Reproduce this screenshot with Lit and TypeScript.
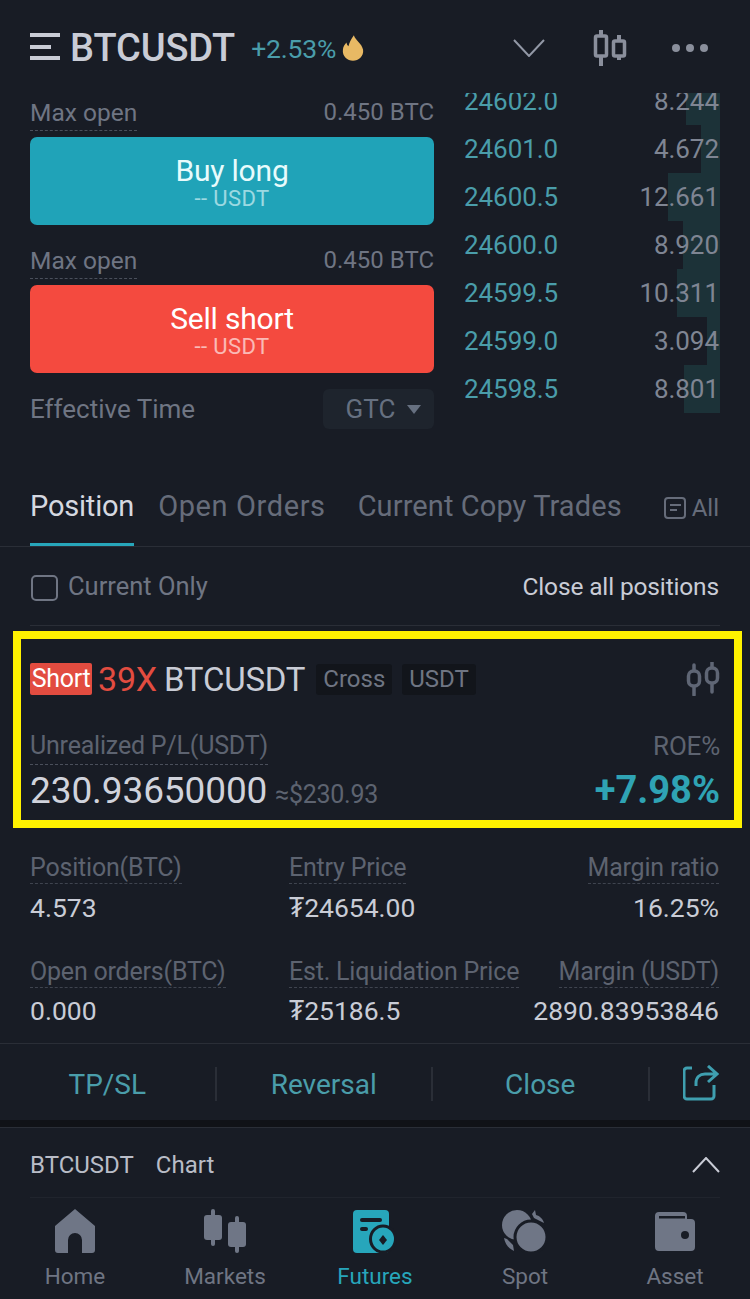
import { LitElement, html, css, svg } from "lit";
import { customElement } from "lit/decorators.js";

const headCandles = html`<svg width="34" height="36" viewBox="0 0 34 36" fill="none" stroke="#8a8f9c">
  <path d="M8 0v36M26 5v25" stroke-width="4"/>
  <rect x="2.5" y="6" width="11" height="20" rx="1.5" fill="#181c25" stroke-width="3.5"/>
  <rect x="20.5" y="11" width="11" height="15" rx="1.5" fill="#181c25" stroke-width="3.5"/>
</svg>`;

const cardCandles = html`<svg width="34" height="34" viewBox="0 0 34 34" fill="none" stroke="#5f6675">
  <path d="M8 3v30M26 0v30" stroke-width="3.5" stroke-linecap="round"/>
  <rect x="2.5" y="9" width="11" height="15" rx="5" fill="#181c25" stroke-width="3.5"/>
  <rect x="20.5" y="6" width="11" height="15" rx="5" fill="#181c25" stroke-width="3.5"/>
</svg>`;

const book: [string, string, number][] = [
  ["24602.0", "8.244", 34],
  ["24601.0", "4.672", 19],
  ["24600.5", "12.661", 52],
  ["24600.0", "8.920", 37],
  ["24599.5", "10.311", 43],
  ["24599.0", "3.094", 13],
  ["24598.5", "8.801", 36],
];

const navIcons = {
  home: svg`<path d="M21 0 L41 17 V41 a3 3 0 0 1 -3 3 H28 V31 a7 7 0 0 0 -14 0 V44 H4 a3 3 0 0 1 -3 -3 V17 Z" fill="#6f7686"/>`,
  markets: svg`<g fill="#6f7686"><rect x="0" y="6" width="18" height="25" rx="3"/><rect x="7" y="0" width="4" height="37" rx="2"/><rect x="24" y="13" width="18" height="25" rx="3"/><rect x="31" y="7" width="4" height="37" rx="2"/></g>`,
  futures: svg`<rect x="0" y="1" width="36" height="43" rx="4" fill="#27a6bb"/><rect x="7" y="9" width="22" height="4" rx="2" fill="#181c25"/><rect x="7" y="18" width="8" height="4" rx="2" fill="#181c25"/><ellipse cx="30" cy="30" rx="12.5" ry="13" fill="#27a6bb" stroke="#181c25" stroke-width="3"/><path d="M30 26l4 5-4 5-4-5z" fill="#181c25"/>`,
  spot: svg`<path d="M33 1l1 5c4 1 7 4 8 8l-4-2-6-3-2-4zM2 29l3 1 6 6 1 6c-5-2-9-7-10-13z" fill="#6f7686"/><circle cx="15" cy="16" r="15" fill="#6f7686"/><circle cx="29" cy="28" r="16" fill="#6f7686" stroke="#181c25" stroke-width="3"/>`,
  asset: svg`<path d="M1 7 a4 4 0 0 1 4-4 H29 a4 4 0 0 1 4 4 V10 H37 a4 4 0 0 1 4 4 V38 a4 4 0 0 1 -4 4 H5 a4 4 0 0 1 -4-4 Z" fill="#6f7686"/><rect x="5" y="7" width="26" height="2.5" fill="#181c25"/><circle cx="31" cy="26" r="4" fill="#181c25"/>`,
};

@customElement("app-root")
export class AppRoot extends LitElement {
  static styles = css`
    :host {
      display: block;
      width: 750px;
      height: 1299px;
      overflow: hidden;
      background: #181c25;
      font-family: Roboto, "Noto Sans", sans-serif;
      color: #6f7583;
    }
    .head { height: 92px; padding: 4px 30px 0; display: flex; align-items: center; box-sizing: border-box; }
    .burger { width: 30px; height: 27px; margin-right: 10px; margin-top: -3px; display: flex; flex-direction: column; justify-content: space-between; }
    .burger i { display: block; height: 4px; background: #c9ccd6; }
    .burger i:nth-child(2) { width: 21px; }
    .sym { font-size: 38px; font-weight: 500; color: #c9ccd6; letter-spacing: -0.1px; }
    .chg { font-size: 26.5px; color: #4a9daa; margin-left: 16px; letter-spacing: -0.2px; }
    .flame { margin-left: 6px; }
    .head-r { margin-left: auto; display: flex; align-items: center; margin-right: 12px; }
    .chev { margin-right: 48px; }
    .dots { margin-left: 45px; display: flex; gap: 6px; }
    .dots i { width: 8px; height: 8px; border-radius: 50%; background: #8a8f9c; }

    .top { display: flex; height: 321px; padding: 0 30px; }
    .left { width: 404px; }
    .maxrow { display: flex; justify-content: space-between; align-items: flex-start; height: 38px; font-size: 24.5px; line-height: 27px; margin-top: 7px; }
    .maxrow.second { margin-top: 0; }
    .amt { font-size: 24px; }
    .dash { border-bottom: 1.5px dashed #4a4f5b; padding-bottom: 4px; }
    .btn { height: 88px; border-radius: 7px; display: flex; flex-direction: column; align-items: center; justify-content: center; padding-top: 2px; box-sizing: border-box; }
    .btn.buy { background: #20a3b8; color: #e8fbfc; }
    .btn.sell { background: #f44a3f; color: #fff; }
    .btn b { font-weight: 400; font-size: 30px; line-height: 33px; letter-spacing: -0.2px; }
    .btn span { font-size: 22px; line-height: 24px; opacity: 0.62; letter-spacing: 0.4px; }
    .gap { height: 22px; }
    .eff { display: flex; justify-content: space-between; align-items: center; margin-top: 16px; font-size: 26px; }
    .gtc { width: 111px; height: 40px; padding-left: 10px; box-sizing: border-box; background: #1e242d; border-radius: 6px; display: flex; align-items: center; justify-content: center; gap: 12px; color: #667080; }
    .tri { width: 0; height: 0; border: 7px solid transparent; border-top: 9px solid #667080; border-bottom: 0; }

    .right { flex: 1; overflow: hidden; margin-top: 1px; }
    .book { margin-top: -16px; }
    .row { position: relative; height: 48px; display: flex; justify-content: space-between; align-items: center; font-size: 26px; padding-left: 30px; letter-spacing: -0.05px; }
    .row .bar { position: absolute; right: 0; top: 0; bottom: 0; background: #1c3238; }
    .row .p { position: relative; color: #4a9daa; }
    .row .q { position: relative; color: #7f8593; margin-right: 1px; }

    .tabs { margin-top: 54px; height: 80px; box-sizing: border-box; border-bottom: 1px solid #2a2e37; padding: 0 30px; display: flex; font-size: 29px; color: #666c7a; align-items: flex-start; }
    .tab { height: 79px; box-sizing: border-box; padding-top: 22px; margin-right: 25px; }
    .tab.on { color: #d5d8e0; border-bottom: 3px solid #27a6bb; letter-spacing: -0.2px; margin-right: 24px; }
    .tab.t2 { letter-spacing: 0.6px; }
    .tab.t3 { margin-right: 0; margin-left: 7px; letter-spacing: 0.1px; }
    .all { margin-left: auto; display: flex; align-items: center; gap: 6px; font-size: 24px; height: 44px; margin-top: 19px; color: #666c7a; }
    .all span { margin-right: 1px; }

    .cur { height: 79px; box-sizing: border-box; margin: 0 30px; border-bottom: 1px solid #2a2e37; display: flex; align-items: center; justify-content: space-between; font-size: 25.5px; }
    .cur .l { display: flex; align-items: center; gap: 10px; color: #6f7583; }
    .box { width: 27px; height: 26px; border: 2.5px solid #6f7583; border-radius: 5px; box-sizing: border-box; margin-left: 1px; margin-top: 4px; }
    .cur .r { color: #c9ccd6; font-size: 24.5px; letter-spacing: -0.15px; margin-right: 1px; }

    .card { margin: 5px 8px 0 13px; height: 197px; box-sizing: border-box; border: 8px solid #fff200; padding: 0 14px 0 9px; }
    .c1 { display: flex; align-items: center; height: 36px; margin-top: 22px; }
    .short { background: #e24c40; color: #fff; font-size: 25px; height: 32px; line-height: 32px; width: 62px; box-sizing: border-box; text-align: center; border-radius: 2px; letter-spacing: -0.3px; }
    .lev { color: #e24c40; font-size: 34px; margin-left: 6px; letter-spacing: -0.2px; }
    .name { color: #c9ccd6; font-size: 33px; margin-left: 7px; letter-spacing: -0.2px; }
    .tag { background: #12151b; color: #6f7583; font-size: 24px; height: 31px; line-height: 30px; padding: 0 7px; border-radius: 3px; margin-left: 10px; }
    .tag.first { margin-left: 11px; }
    .c1 svg { margin-left: auto; }
    .c2 { display: flex; justify-content: space-between; margin-top: 35px; font-size: 25px; line-height: 28px; color: #5d6370; letter-spacing: -0.2px; }
    .c2 .roel { font-size: 26px; }
    .c3 { display: flex; justify-content: space-between; align-items: baseline; margin-top: 3px; }
    .val { font-size: 37px; color: #d0d3dc; letter-spacing: -0.1px; }
    .usd { font-size: 25px; color: #5d6370; margin-left: 8px; letter-spacing: -0.3px; }
    .roe { font-size: 38px; font-weight: 700; color: #2fa3b4; }

    .stats { padding: 25px 31px 0 30px; height: 216px; box-sizing: border-box; border-bottom: 1px solid #2a2e37; }
    .srow { display: grid; grid-template-columns: 259px 1fr auto; height: 104px; }
    .srow > div:last-child { text-align: right; }
    .k { font-size: 25px; line-height: 30px; color: #5d6370; letter-spacing: -0.2px; display: inline-block; border-bottom: 1.5px dashed #3f444f; }
    .v { font-size: 26.5px; line-height: 30px; margin-top: 9px; color: #c9ccd6; }
    .srow + .srow .v { margin-top: 8px; }

    .actions { height: 76px; display: flex; align-items: center; font-size: 28px; color: #4a9daa; }
    .act { width: 216.5px; box-sizing: border-box; text-align: center; height: 34px; line-height: 36px; border-right: 2px solid #2a2e37; margin-top: 4px; }
    .shr { margin-left: 33px; margin-top: 2px; }
    .band { height: 8px; background: #101217; border-bottom: 1px solid #2a2e37; box-sizing: border-box; }
    .chart { height: 70px; padding-top: 4px; margin: 0 30px; box-sizing: border-box; border-bottom: 1px solid #20242d; display: flex; align-items: center; font-size: 24px; color: #b9bcc7; gap: 22px; }
    .chart svg { margin-left: auto; }

    .nav { display: grid; grid-template-columns: repeat(5, 150px); height: 100px; }
    .ni { display: flex; flex-direction: column; align-items: center; padding-top: 11px; font-size: 22.5px; color: #6f7583; }
    .ni svg { height: 44px; display: block; }
    .ni span { margin-top: 9px; line-height: 28px; }
    .ni.on { color: #27a6bb; }
  `;

  render() {
    return html`
      <div class="head">
        <div class="burger"><i></i><i></i><i></i></div>
        <span class="sym">BTCUSDT</span>
        <span class="chg">+2.53%</span>
        <svg class="flame" width="22" height="26" viewBox="0 0 24 28"><path d="M13 0c1 5 9 9 10 16 1 7-5 12-11 12S0 23 1 16c0-3 2-6 4-8 0 2 1 3 2 4 1-4 3-8 6-12z" fill="#e8b964"/></svg>
        <div class="head-r">
          <svg class="chev" width="32" height="18" viewBox="0 0 32 18" fill="none"><path d="M1 1l15 16L31 1" stroke="#9298a6" stroke-width="2"/></svg>
          ${headCandles}
          <div class="dots"><i></i><i></i><i></i></div>
        </div>
      </div>
      <div class="top">
        <div class="left">
          <div class="maxrow"><span class="dash">Max open</span><span class="amt">0.450 BTC</span></div>
          <div class="btn buy"><b>Buy long</b><span>-- USDT</span></div>
          <div class="gap"></div>
          <div class="maxrow second"><span class="dash">Max open</span><span class="amt">0.450 BTC</span></div>
          <div class="btn sell"><b>Sell short</b><span>-- USDT</span></div>
          <div class="eff"><span>Effective Time</span><div class="gtc">GTC<i class="tri"></i></div></div>
        </div>
        <div class="right">
          <div class="book">
            ${book.map(([p, q, w]) => html`<div class="row"><i class="bar" style="width:${w}px"></i><span class="p">${p}</span><span class="q">${q}</span></div>`)}
          </div>
        </div>
      </div>
      <div class="tabs">
        <div class="tab on">Position</div>
        <div class="tab t2">Open Orders</div>
        <div class="tab t3">Current Copy Trades</div>
        <div class="all">
          <svg width="22" height="22" viewBox="0 0 22 22" fill="none" stroke="#666c7a" stroke-width="2"><rect x="1" y="1" width="20" height="20" rx="3"/><path d="M6 8h11M6 13h7"/></svg>
          <span>All</span>
        </div>
      </div>
      <div class="cur">
        <div class="l"><i class="box"></i>Current Only</div>
        <div class="r">Close all positions</div>
      </div>
      <div class="card">
        <div class="c1">
          <span class="short">Short</span><span class="lev">39X</span><span class="name">BTCUSDT</span>
          <span class="tag first">Cross</span><span class="tag">USDT</span>
          ${cardCandles}
        </div>
        <div class="c2"><span class="dash">Unrealized P/L(USDT)</span><span class="roel">ROE%</span></div>
        <div class="c3"><div><span class="val">230.93650000</span><span class="usd">≈$230.93</span></div><span class="roe">+7.98%</span></div>
      </div>
      <div class="stats">
        <div class="srow">
          <div><div class="k">Position(BTC)</div><div class="v">4.573</div></div>
          <div><div class="k">Entry Price</div><div class="v">₮24654.00</div></div>
          <div><div class="k">Margin ratio</div><div class="v">16.25%</div></div>
        </div>
        <div class="srow">
          <div><div class="k">Open orders(BTC)</div><div class="v">0.000</div></div>
          <div><div class="k">Est. Liquidation Price</div><div class="v">₮25186.5</div></div>
          <div><div class="k">Margin (USDT)</div><div class="v">2890.83953846</div></div>
        </div>
      </div>
      <div class="actions">
        <div class="act">TP/SL</div><div class="act">Reversal</div><div class="act">Close</div>
        <svg class="shr" width="36" height="36" viewBox="0 0 36 36" fill="none" stroke="#3f9fb0" stroke-width="3"><path d="M9 3H4a3 3 0 0 0-3 3V31a3 3 0 0 0 3 3H28a3 3 0 0 0 3-3V20"/><path d="M13 21v-3c0-6 4-9 9-9h11M25 1l9 8-9 8"/></svg>
      </div>
      <div class="band"></div>
      <div class="chart"><span>BTCUSDT</span><span>Chart</span>
        <svg width="28" height="16" viewBox="0 0 28 16" fill="none"><path d="M1 15L14 1l13 14" stroke="#c9ccd6" stroke-width="2"/></svg>
      </div>
      <div class="nav">
        <div class="ni"><svg viewBox="0 0 42 44" width="42">${navIcons.home}</svg><span>Home</span></div>
        <div class="ni"><svg viewBox="0 0 42 44" width="42">${navIcons.markets}</svg><span>Markets</span></div>
        <div class="ni on"><svg viewBox="0 0 44 44" width="44">${navIcons.futures}</svg><span>Futures</span></div>
        <div class="ni"><svg viewBox="0 0 46 44" width="46">${navIcons.spot}</svg><span>Spot</span></div>
        <div class="ni"><svg viewBox="0 0 42 44" width="42">${navIcons.asset}</svg><span>Asset</span></div>
      </div>
    `;
  }
}
